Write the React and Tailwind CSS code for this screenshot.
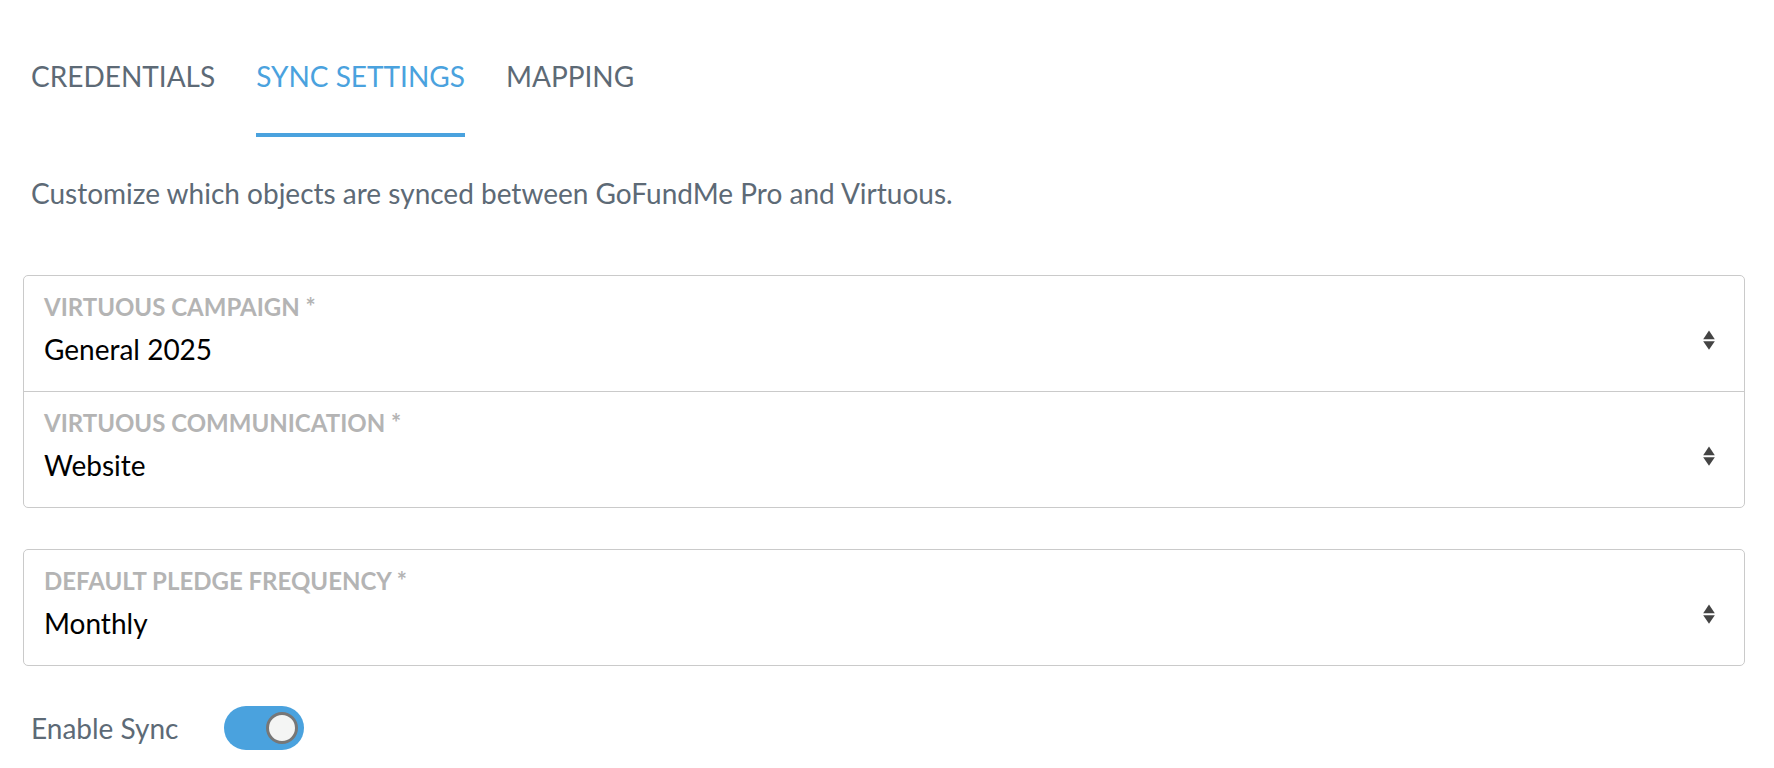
import React, { useState } from 'react';

const tabs = ['CREDENTIALS', 'SYNC SETTINGS', 'MAPPING'];

function SortArrows() {
    return (
        <svg width="12" height="20" viewBox="0 0 12 20" className="shrink-0">
            <path d="M6 0.5 L11.8 9.3 L0.2 9.3 Z" fill="#444" strokeLinejoin="round" />
            <path d="M0.2 11.3 L11.8 11.3 L6 19.8 Z" fill="#444" strokeLinejoin="round" />
        </svg>
    );
}

function SelectRow({ label, value, divider }) {
    return (
        <div className={`flex items-center justify-between pl-[20px] pr-[29px] ${divider ? 'border-t border-[#cacaca]' : ''}`}>
            <div className="flex flex-col pt-[17px] pb-[25px]">
                <span className="text-[24px] leading-[28px] font-bold text-[#b4b4b4]">{label}</span>
                <span className="mt-[11px] text-[28px] leading-[34px] text-black">{value}</span>
            </div>
            <div className="mt-[12px]">
                <SortArrows />
            </div>
        </div>
    );
}

function App() {
    const [active, setActive] = useState(1);
    const [enabled, setEnabled] = useState(true);

    return (
        <div className="min-h-screen bg-white font-[Lato,sans-serif] pl-[23px] pr-[29px]">

            {/* Tabs */}
            <div className="flex gap-[41px] pl-[8px] pt-[59px]">
                {tabs.map((tab, i) => (
                    <button
                        key={tab}
                        onClick={() => setActive(i)}
                        className={`pb-[40px] border-b-4 text-[28px] leading-[34px] ${i === active ? 'border-[#4aa2de] text-[#4aa2de]' : 'border-transparent text-[#5d6a76]'}`}
                    >
                        {tab}
                    </button>
                ))}
            </div>

            <p className="mt-[39px] pl-[8px] text-[28px] leading-[34px] text-[#5d6a76]">
                Customize which objects are synced between GoFundMe Pro and Virtuous.
            </p>

            {/* Virtuous selects */}
            <div className="mt-[65px] border border-[#cacaca] rounded-[5px]">
                <SelectRow label="VIRTUOUS CAMPAIGN *" value="General 2025" />
                <SelectRow label="VIRTUOUS COMMUNICATION *" value="Website" divider />
            </div>

            <div className="mt-[41px] border border-[#cacaca] rounded-[5px]">
                <SelectRow label="DEFAULT PLEDGE FREQUENCY *" value="Monthly" />
            </div>

            {/* Enable sync */}
            <div className="mt-[40px] pl-[8px] flex items-center">
                <span className="w-[193px] text-[28px] leading-[34px] text-[#5d6a76]">Enable Sync</span>
                <button
                    onClick={() => setEnabled(!enabled)}
                    className={`w-[80px] h-[44px] rounded-full flex items-center px-[6px] ${enabled ? 'bg-[#4aa2de] justify-end' : 'bg-[#cccccc] justify-start'}`}
                >
                    <span className="w-[32px] h-[32px] rounded-full bg-[#f4f5f4] border-[3px] border-[#777]" />
                </button>
            </div>

        </div>
    );
}

export default App;
